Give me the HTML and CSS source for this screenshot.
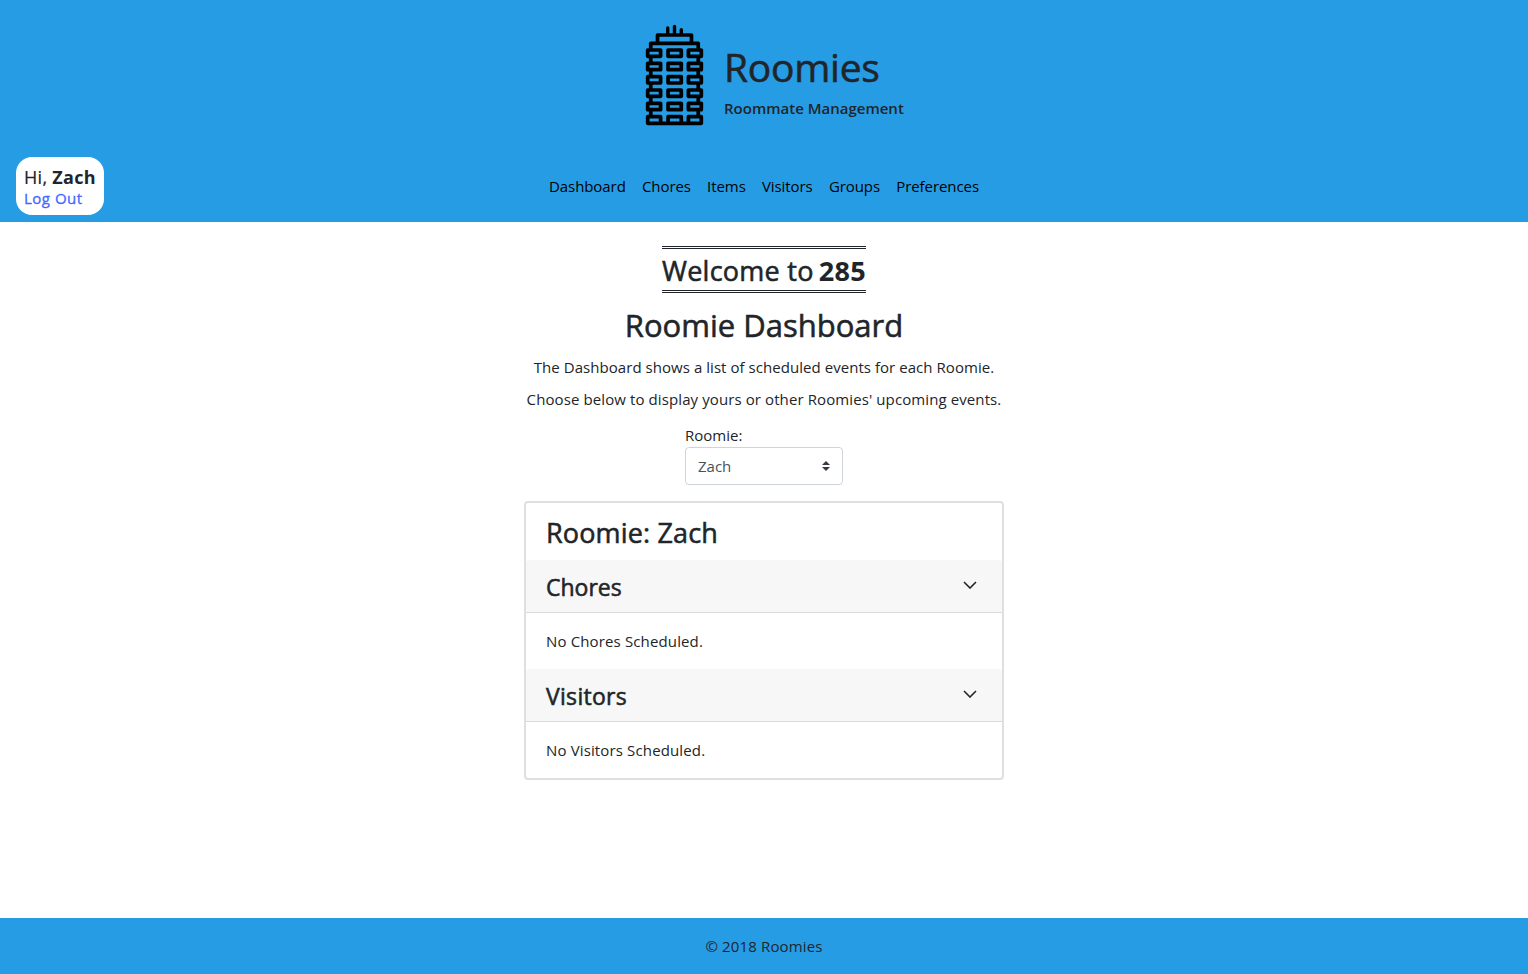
FILE: index.html
```html
<!DOCTYPE html>
<html lang="en">
<head>
<meta charset="utf-8">
<title>Roomies</title>
<link rel="stylesheet" href="styles.css">
</head>
<body>
<header class="header">
  <div class="brand">
    <svg class="logo" viewBox="36 27 168 300" preserveAspectRatio="none" fill="none" stroke="#000" stroke-width="11">
      <g stroke-linecap="round" stroke-width="10"><path d="M100 36V55M120 31V55M140 41V55"/></g>
      <path stroke-linejoin="round" d="M70 82V57H170V82M50 98V82H190V98M50 122V142M50 162V182M50 202V222M50 242V262M50 282V302M190 122V142M190 162V182M190 202V222M190 242V262M190 282V302"/>
      <path stroke-linejoin="round" d="M41 102H79V121H41ZM101 102H140V121H101ZM161 102H199V121H161ZM41 142H79V161H41ZM101 142H140V161H101ZM161 142H199V161H161ZM41 182H79V201H41ZM101 182H140V201H101ZM161 182H199V201H161ZM41 222H79V241H41ZM101 222H140V241H101ZM161 222H199V241H161ZM41 262H79V281H41ZM101 262H140V281H101ZM161 262H199V281H161ZM41 302H79V322H41ZM101 302H140V322H101ZM161 302H199V322H161ZM41 322H199"/>
    </svg>
    <div class="brand-text">
      <h1 class="brand-name">Roomies</h1>
      <p class="tagline">Roommate Management</p>
    </div>
  </div>
  <div class="nav-row">
    <div class="user">
      <div class="greeting">Hi, <b>Zach</b></div>
      <a class="logout">Log Out</a>
    </div>
    <nav class="nav">
      <a>Dashboard</a><a>Chores</a><a>Items</a><a>Visitors</a><a>Groups</a><a>Preferences</a>
    </nav>
  </div>
</header>
<main class="main">
  <div class="welcome"><span class="welcome-to">Welcome to</span><b>285</b></div>
  <h2 class="title">Roomie Dashboard</h2>
  <p class="intro">The Dashboard shows a list of scheduled events for each Roomie.</p>
  <p class="intro intro-more">Choose below to display yours or other Roomies' upcoming events.</p>
  <div class="field">
    <span class="label">Roomie:</span>
    <div class="select"><span>Zach</span>
      <svg class="caret" viewBox="0 0 4 5"><path fill="#343a40" d="M2 0L0 2h4zm0 5L0 3h4z"/></svg>
    </div>
  </div>
  <section class="card">
    <h3 class="card-title">Roomie: Zach</h3>
    <div class="card-header"><h4>Chores</h4>
      <svg class="chevron" viewBox="0 0 14 8"><path d="M1 1L7 7L13 1"/></svg></div>
    <p class="card-body">No Chores Scheduled.</p>
    <div class="card-header"><h4 class="visitors-title">Visitors</h4>
      <svg class="chevron" viewBox="0 0 14 8"><path d="M1 1L7 7L13 1"/></svg></div>
    <p class="card-body">No Visitors Scheduled.</p>
  </section>
</main>
<footer class="footer">© 2018 Roomies</footer>
</body>
</html>
```
FILE: styles.css
```css
* { box-sizing: border-box; }
body {
  margin: 0;
  height: 974px;
  display: flex;
  flex-direction: column;
  font-family: "Open Sans", "Noto Sans", sans-serif;
  font-size: 15px;
  line-height: 24px;
  color: #212529;
  background: #fff;
}
h1, h2, h3, h4, p { margin: 0; font-weight: 500; white-space: nowrap; }
h1, h2, h3, h4, .welcome-to { -webkit-text-stroke: 0.55px currentColor; }
.header { height: 222px; background: #269ce5; }
.brand { height: 150px; display: flex; padding: 25px 0 0 645.5px; gap: 21.5px; }
.logo { width: 57px; height: 100px; overflow: visible; }
.brand-text { padding-top: 18px; }
.brand-name { font-size: 39px; line-height: 48px; letter-spacing: -0.25px; }
.tagline { font-size: 15px; font-weight: 600; line-height: 24px; margin-top: 5px; }
.nav-row { display: grid; grid-template-columns: 1fr auto 1fr; align-items: center; padding: 7px 16px; }
.user { width: 88px; height: 58px; padding: 9px 8px; border-radius: 16px; background: #fff; white-space: nowrap; }
.greeting { font-size: 18px; line-height: 23px; letter-spacing: 0.3px; -webkit-text-stroke: 0.2px currentColor; }
.greeting b { -webkit-text-stroke: 0; }
.logout { display: block; font-size: 15px; line-height: 19px; letter-spacing: 0.5px; color: #4169ff; -webkit-text-stroke: 0.3px currentColor; }
.nav { display: flex; gap: 16.2px; color: #000; letter-spacing: -0.07px; }
.main { flex: 1; display: flex; flex-direction: column; align-items: center; padding-top: 24px; }
.welcome { width: 204px; height: 47px; border-top: 3px double #212529; border-bottom: 3px double #212529; display: flex; justify-content: space-between; font-size: 27px; line-height: 43px; white-space: nowrap; }
.welcome-to { letter-spacing: 0.25px; }
.welcome b { letter-spacing: 0.3px; }
.title { font-size: 31px; line-height: 38px; margin: 13px 0 11px; }
.intro { font-weight: 400; margin-bottom: 8px; letter-spacing: 0.05px; }
.intro-more { letter-spacing: 0.1px; }
.field { width: 158px; margin-top: 4px; }
.label { display: block; }
.select { height: 38px; border: 1px solid #ced4da; border-radius: 4px; display: flex; align-items: center; justify-content: space-between; padding: 0 12px; color: #495057; }
.caret { width: 8px; height: 10px; }
.card { width: 480px; height: 279px; margin-top: 16px; border: 2px solid #dfdfdf; border-radius: 4px; }
.card-title { height: 57px; padding: 13px 20px 0; font-size: 27px; line-height: 34px; letter-spacing: 0.15px; }
.card-header { height: 53px; display: flex; justify-content: space-between; padding: 12px 25px 0 20px; background: #f7f7f7; border-bottom: 1px solid #d9d9d9; border-radius: 3px 3px 0 0; }
.card-header h4 { font-size: 23px; line-height: 30px; }
.card-header .visitors-title { letter-spacing: 0.3px; }
.chevron { width: 14px; height: 8px; margin-top: 9px; fill: none; stroke: #212529; stroke-width: 1.6; }
.card-body { height: 56px; padding: 16px 20px; font-weight: 400; letter-spacing: 0.14px; }
.footer { height: 56px; padding-top: 16px; background: #269ce5; text-align: center; letter-spacing: 0.15px; }
```
